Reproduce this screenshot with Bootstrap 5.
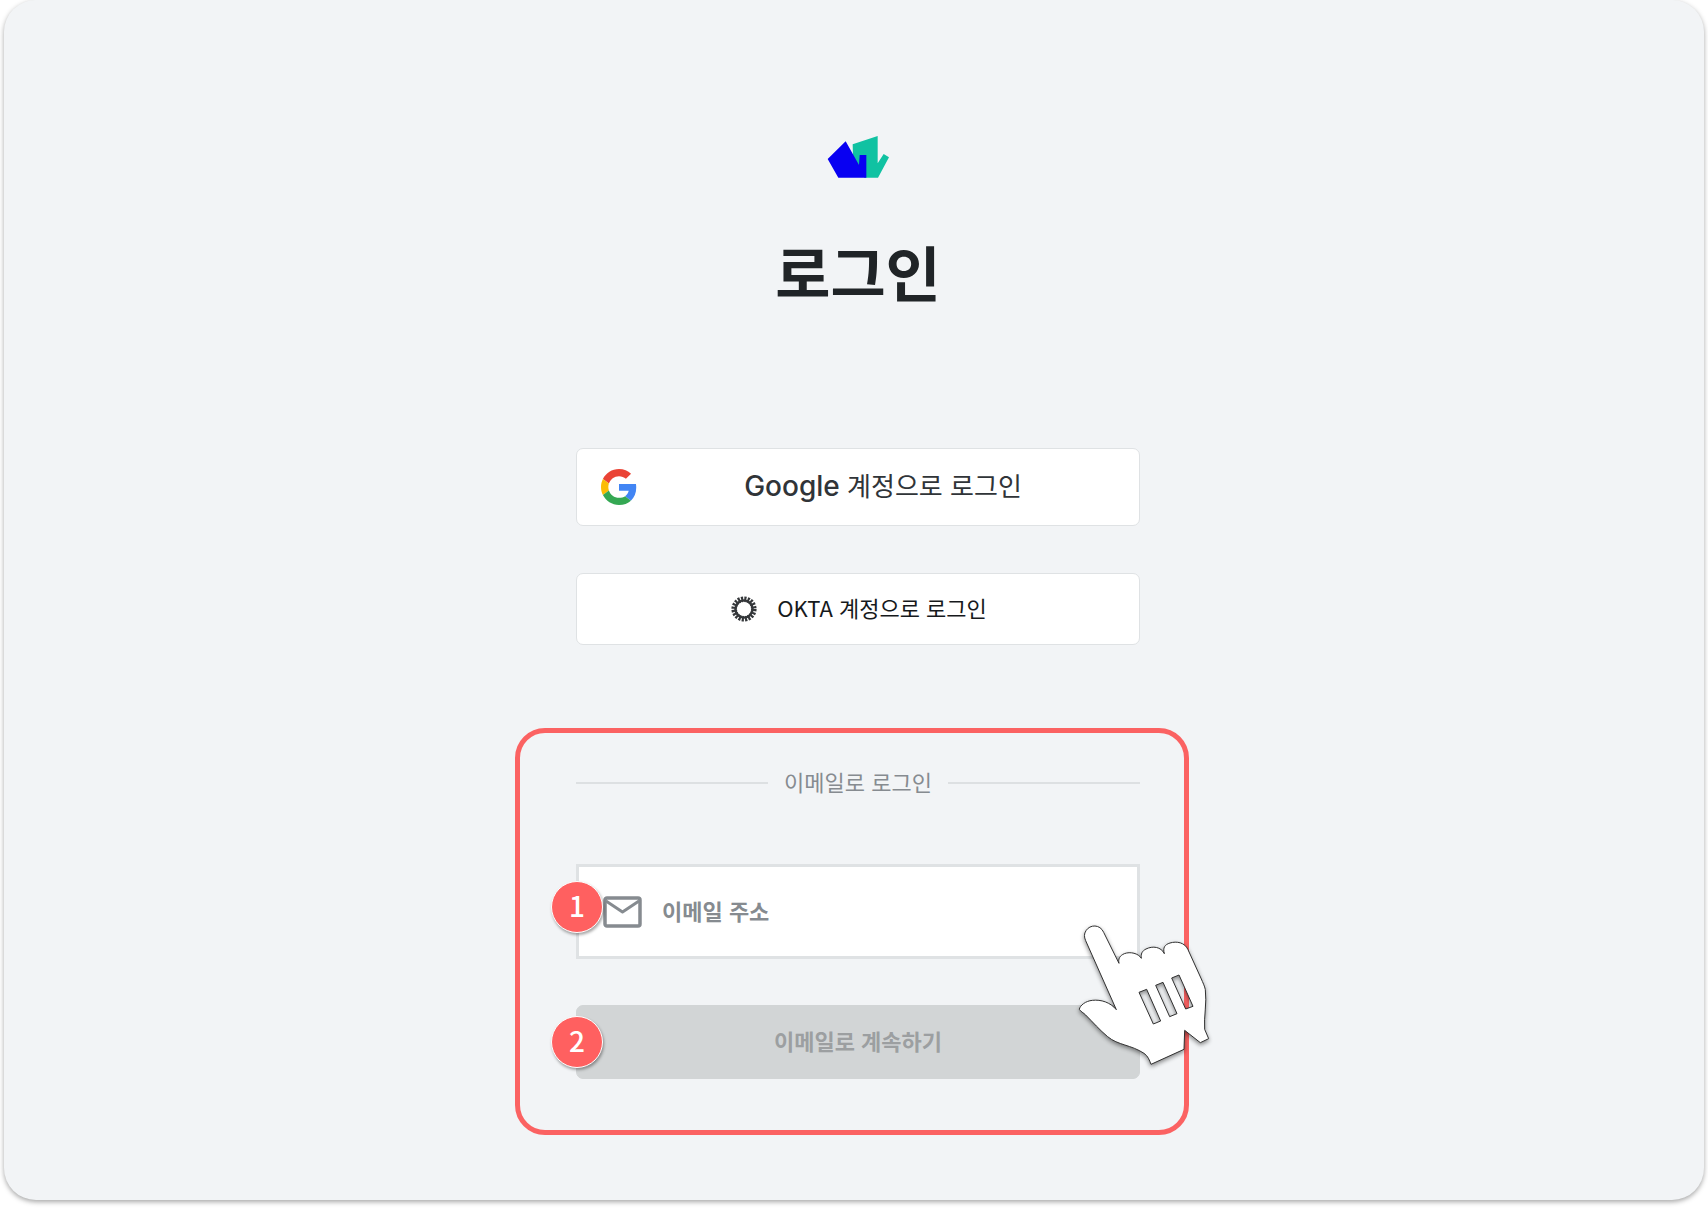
<!DOCTYPE html>
<html lang="ko">
<head>
<meta charset="utf-8">
<meta name="viewport" content="width=device-width, initial-scale=1">
<title>로그인</title>
<link href="https://cdn.jsdelivr.net/npm/bootstrap@5.3.0/dist/css/bootstrap.min.css" rel="stylesheet">
<style>
  body { background: #fff; font-family: "Noto Sans CJK KR", sans-serif; font-size: 22px; line-height: 32px; color: #212529; }
  .page-frame { padding: 0 4px 8px; min-height: 100vh; }
  .login-panel { background: #f2f4f6; border-radius: 32px; box-shadow: 0 2px 5px rgba(0,0,0,.35); padding: 134px 4px 65px 0; }
  .login-column { max-width: 674px; }
  .inset-x { padding-left: 61px; padding-right: 49px; }
  .page-title { font-size: 60px; line-height: 84px; font-weight: 700; color: #202427; margin: 48px 0 135px; }
  .sso-btn { --bs-btn-bg: #fff; --bs-btn-border-color: #dfe2e4; --bs-btn-hover-bg: #fafbfb; --bs-btn-hover-border-color: #d0d4d7;
    --bs-btn-border-radius: 7px; --bs-btn-padding-y: 0; --bs-btn-padding-x: 24px; --bs-btn-font-size: 22px; --bs-btn-line-height: 32px; }
  .sso-google { height: 78px; --bs-btn-font-size: 26px; --bs-btn-color: #303438; margin-bottom: 47px; padding-right: 26px; }
  .sso-google .latin { font-family: Inter, sans-serif; font-size: 28px; font-weight: 500; }
  .sso-okta { height: 72px; --bs-btn-color: #16191c; }
  .text-lift { padding-bottom: 4px; }
  .email-box { position: relative; border: 5px solid #fb6262; border-radius: 30px; padding: 32px 44px 51px 56px; margin-top: 83px; }
  .divider-text { color: #868b90; margin-bottom: 63px; }
  .divider-line { height: 2px; background: #dde0e2; }
  .mail-field { height: 95px; background: #fff; border: 3px solid #dfe2e4; padding-left: 24px; color: #868b90; margin-bottom: 46px; }
  .mail-field .form-control { font-size: 22px; font-weight: 700; line-height: 32px; color: #868b90; box-shadow: none; margin-left: 20px; padding: 4px 0 8px; }
  .mail-field .form-control::placeholder { color: #868b90; opacity: 1; }
  .continue-btn { height: 74px; --bs-btn-border-radius: 7px; --bs-btn-font-size: 22px; --bs-btn-font-weight: 700; --bs-btn-line-height: 32px;
    --bs-btn-disabled-bg: #d2d5d6; --bs-btn-disabled-border-color: #d2d5d6; --bs-btn-disabled-color: #9c9fa1; --bs-btn-disabled-opacity: 1; }
  .step-dot { position: absolute; left: -25px; width: 52px; height: 52px; border-radius: 50%; border: 1px solid #fff; background: #ff6060; color: #fff;
    font-size: 28px; font-weight: 500; line-height: 46px; text-align: center; box-shadow: 1px 2px 3px rgba(0,0,0,.35); }
  .step-one { top: 17px; }
  .step-two { top: 11px; }
  .hand { position: absolute; right: -46px; top: 177px; filter: drop-shadow(0 2px 2px rgba(0,0,0,.45)); pointer-events: none; }
</style>
</head>
<body>
<div class="page-frame">
<main class="login-panel">
  <div class="login-column mx-auto">
    <header class="inset-x text-center">
      <svg class="d-block mx-auto" width="64" height="47" viewBox="0 0 192 141" role="img" aria-label="로고">
        <path fill="#10c2a2" d="M80 31 155 6V88L173 60 189 70 156 131H115L81 68Z"/>
        <path fill="#0800f2" d="M5 75 59 22 99 93 101 63H121V131H37Z"/>
      </svg>
      <h1 class="page-title">로그인</h1>
    </header>
    <div class="inset-x">
      <button type="button" class="btn sso-btn sso-google d-flex align-items-center w-100">
        <svg width="36" height="36" viewBox="0 0 48 48" aria-hidden="true">
          <path fill="#ea4335" d="M24 9.5c3.54 0 6.71 1.22 9.21 3.6l6.85-6.85C35.9 2.38 30.47 0 24 0 14.62 0 6.51 5.38 2.56 13.22l7.98 6.19C12.43 13.72 17.74 9.5 24 9.5z"/>
          <path fill="#4285f4" d="M46.98 24.55c0-1.57-.15-3.09-.38-4.55H24v9.02h12.94c-.58 2.96-2.26 5.48-4.78 7.18l7.73 6c4.51-4.18 7.09-10.36 7.09-17.65z"/>
          <path fill="#fbbc05" d="M10.53 28.59c-.48-1.45-.76-2.99-.76-4.59s.27-3.14.76-4.59l-7.98-6.19C.92 16.46 0 20.12 0 24c0 3.88.92 7.54 2.56 10.78l7.97-6.19z"/>
          <path fill="#34a853" d="M24 48c6.48 0 11.93-2.13 15.89-5.81l-7.73-6c-2.15 1.45-4.92 2.3-8.16 2.3-6.26 0-11.57-4.22-13.47-9.91l-7.98 6.19C6.51 42.62 14.62 48 24 48z"/>
        </svg>
        <span class="flex-grow-1 text-center text-lift ps-3"><span class="latin">Google</span> 계정으로 로그인</span>
      </button>
      <button type="button" class="btn sso-btn sso-okta d-flex align-items-center justify-content-center w-100">
        <svg class="me-3" width="32" height="26" viewBox="-15 -13 32 26" aria-hidden="true">
          <circle r="9.800" fill="none" stroke="#34373a" stroke-width="5.600" stroke-dasharray="2 1.079"/>
          <circle r="8.600" fill="none" stroke="#34373a" stroke-width="2.400"/>
        </svg>
        <span class="text-lift">OKTA 계정으로 로그인</span>
      </button>
    </div>
    <form class="email-box">
      <div class="divider-text d-flex align-items-center gap-3">
        <span class="divider-line flex-grow-1"></span><span class="text-lift">이메일로 로그인</span><span class="divider-line flex-grow-1"></span>
      </div>
      <div class="position-relative">
        <div class="mail-field d-flex align-items-center">
          <label for="email" aria-label="이메일 주소" class="d-flex">
            <svg width="39" height="32" viewBox="0 0 39 32" fill="none" stroke="#868b90" stroke-width="3.500" stroke-linejoin="round" aria-hidden="true">
              <rect x="2" y="2" width="35" height="28" rx="2"/><path stroke-width="3" d="M3 5 19.500 16 36 5"/>
            </svg>
          </label>
          <input id="email" type="email" class="form-control border-0 rounded-0 bg-transparent" placeholder="이메일 주소">
        </div>
        <span class="step-dot step-one">1</span>
      </div>
      <div class="position-relative">
        <button type="submit" class="btn continue-btn w-100" disabled><span class="d-block text-lift">이메일로 계속하기</span></button>
        <span class="step-dot step-two">2</span>
      </div>
      <svg class="hand" width="170" height="170" viewBox="0 0 510 510" aria-hidden="true">
        <path fill="#fff" stroke="#303030" stroke-width="3" fill-rule="evenodd" d="M177 160 131 67C120 42 90 43 78 62C72 71 72 81 77 92L169 299C151 277 123 268 97 271C77 273 60 286 58 298C62 305 70 308 77 315C99 337 119 360 143 380C174 406 213 404 252 430C264 438 268 450 273 463L372 418L374 361L421 398L446 386L434 358C431 321 441 279 436 239C434 228 428 217 424 207L384 119C374 97 350 93 330 99C314 104 308 113 313 131C303 110 278 107 258 117C246 123 242 132 244 145C235 130 211 124 193 131C179 137 174 147 177 160ZM237 247 260 238 302 333 280 342ZM287 226 309 217 351 311 329 320ZM335 204 357 195 399 289 377 297Z"/>
      </svg>
    </form>
  </div>
</main>
</div>
<script src="https://cdn.jsdelivr.net/npm/bootstrap@5.3.0/dist/js/bootstrap.bundle.min.js"></script>
</body>
</html>
